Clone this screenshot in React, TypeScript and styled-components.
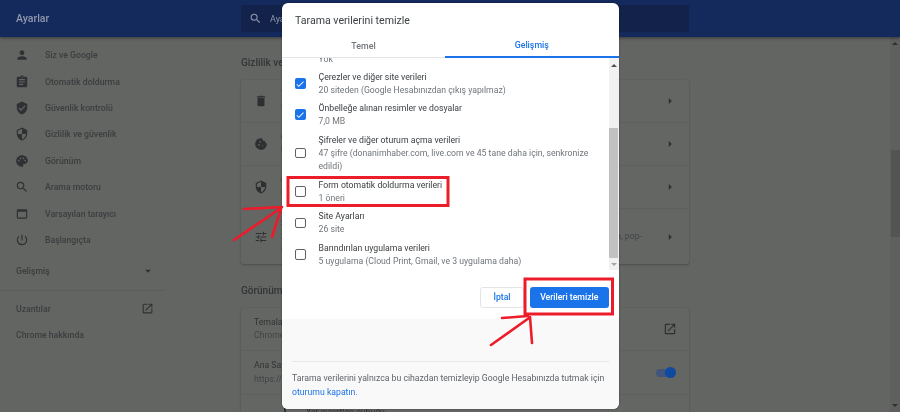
import React from "react";
import styled, { createGlobalStyle } from "styled-components";
import {
  MdPerson, MdAssignment, MdVerifiedUser, MdSecurity, MdPalette, MdSearch, MdWebAsset,
  MdPowerSettingsNew, MdOpenInNew, MdDelete, MdCookie, MdTune, MdArrowDropDown, MdArrowRight, MdCheck,
} from "react-icons/md";

const Global = createGlobalStyle`
  html, body { margin: 0; padding: 0; width: 900px; height: 412px; overflow: hidden; background: #636563; }
  * { box-sizing: border-box; }
  body { font-family: Roboto, "Liberation Sans", sans-serif; }
`;

const Page = styled.div`
  position: relative; width: 900px; height: 412px; overflow: hidden; background: #636563;
  color: #38393b; font-size: 8.7px; filter: blur(0.35px);
`;
const TopBar = styled.header`
  height: 37px; background: #152a5c; display: flex; align-items: center;
  box-shadow: 0 1px 3px rgba(0,0,0,.45); position: relative; z-index: 1;
`;
const BarTitle = styled.div`width: 241px; padding-left: 16px; color: #8f98ad; font-size: 10.5px; font-weight: 500;`;
const SearchBox = styled.div`
  width: 448px; height: 27px; background: #12224a; border-radius: 2px; display: flex; align-items: center;
  padding-left: 8px; gap: 8px; color: #8f98ad; font-size: 9px;
  svg { font-size: 13px; }
`;
const Body = styled.div`display: flex; height: 375px;`;
const Side = styled.nav`width: 165px; padding-top: 5px; flex: none;`;
const SideRow = styled.div`
  height: 26.4px; display: flex; align-items: center; padding-left: 15px; gap: 16px; font-weight: 500; color: #3c3d3f;
  svg { font-size: 14px; flex: none; color: #303134; }
`;
const SideAdv = styled.div`
  height: 26.4px; margin-top: 5px; display: flex; align-items: center; justify-content: space-between; padding: 0 10px 0 16px;
  font-weight: 500; color: #3c3d3f;
  svg { font-size: 14px; color: #303134; }
`;
const SideLine = styled.div`height: 1px; background: #5c5e5c; margin: 5px 0 5px;`;
const SideLink = styled(SideAdv)`margin-top: 0; padding-right: 11px; svg { font-size: 13px; }`;
const Main = styled.main`flex: 1; padding-left: 76px;`;
const Content = styled.div`width: 448px;`;
const Heading = styled.h2<{ $top: number }>`
  margin: ${(p) => p.$top}px 0 0; height: 14px; line-height: 14px; font-size: 10px; font-weight: 500; color: #333437;
`;
const Card = styled.section`
  background: #646664; border-radius: 2px; margin-top: 10px;
  box-shadow: 0 1px 2px rgba(0,0,0,.22), 0 0 1px rgba(0,0,0,.15);
`;
const Row = styled.div<{ $h: number }>`
  height: ${(p) => p.$h}px; display: flex; align-items: center; padding: 0 12px 0 13px; gap: 13px;
  & + & { border-top: 1px solid #5e605e; }
`;
const RowIcon = styled.span`display: flex; flex: none; font-size: 14px; color: #2e2f31;`;
const RowText = styled.div`flex: 1; line-height: 13.2px;`;
const RowTitle = styled.div`color: #323335;`;
const RowSub = styled.div`color: #434446;`;
const Chevron = styled.span`display: flex; font-size: 14px; color: #2e2f31;`;
const PlainRow = styled(Row)`padding-left: 13px;`;
const FontRow = styled(Row)`padding-left: 43px; gap: 16px; align-items: flex-start; padding-top: 11px;`;
const FontMark = styled.span`width: 6px; height: 10px; border-left: 2px solid #2e2f31; flex: none;`;
const Toggle = styled.span`
  position: relative; width: 19px; height: 8px; border-radius: 4px; background: #41557f; margin-right: 2px; flex: none;
  &::after { content: ""; position: absolute; right: -1px; top: -1.5px; width: 11px; height: 11px; border-radius: 50%; background: #0f4aa0; }
`;
const PageScroll = styled.div`
  width: 10px; flex: none; background: #5e5f5e; display: flex; flex-direction: column; align-items: center; height: 375px;
`;
const Arrow = styled.span<{ $down?: boolean; $c: string }>`
  display: block; width: 0; height: 0; flex: none; border-left: 3px solid transparent; border-right: 3px solid transparent;
  ${(p) => (p.$down ? `border-top: 3px solid ${p.$c};` : `border-bottom: 3px solid ${p.$c};`)}
`;
const PageThumb = styled.div`width: 9px; height: 87px; margin-top: 105px; background: #535453; margin-bottom: auto;`;
const PageArrowUp = styled(Arrow)`margin-top: 5px;`;
const PageArrowDown = styled(Arrow)`margin-bottom: 5px;`;

const Modal = styled.div`
  position: absolute; z-index: 2; left: 282px; top: 3px; width: 336.5px; height: 406px; background: #fff; border-radius: 6px;
  display: flex; flex-direction: column; overflow: hidden; color: #202124; box-shadow: 0 0 2px rgba(0,0,0,.4);
`;
const ModalTitle = styled.div`height: 33px; padding: 11px 0 0 13px; font-size: 10.6px; line-height: 14px; color: #3c4043;`;
const Tabs = styled.div`
  height: 22px; display: grid; grid-template-columns: 163px 1fr; border-bottom: 1px solid #e4e5e7; font-size: 8.8px; font-weight: 500;
`;
const Tab = styled.div<{ $on?: boolean }>`
  display: flex; align-items: center; justify-content: center; padding-bottom: 2px; height: 22px;
  color: ${(p) => (p.$on ? "#1a73e8" : "#70757a")};
  border-bottom: ${(p) => (p.$on ? "2px solid #1a73e8" : "none")};
`;
const Scroller = styled.div`height: 212px; display: flex; flex: none; overflow: hidden;`;
const List = styled.div`flex: 1; margin-top: -21px; padding-left: 13px;`;
const ListItem = styled.div<{ $h: number }>`
  height: ${(p) => p.$h}px; display: flex; align-items: center; gap: 13px;
`;
const Box = styled.span<{ $on?: boolean }>`
  width: 10.5px; height: 10.5px; flex: none; border-radius: 2px; display: flex; align-items: center; justify-content: center;
  background: ${(p) => (p.$on ? "#1a73e8" : "#fff")};
  border: ${(p) => (p.$on ? "none" : "1.4px solid #5f6368")};
  color: #fff; font-size: 10px;
`;
const ItemText = styled.div`flex: 1; line-height: 13px; padding-right: 16px;`;
const ItemTitle = styled.div`color: #3c4043;`;
const ItemSub = styled.div`color: #70757a;`;
const Bar = styled.div`
  width: 10px; flex: none; background: #f1f1f1; display: flex; flex-direction: column; align-items: center; padding-top: 6px;
`;
const BarThumb = styled.div`width: 8.5px; height: 130px; margin-top: 61px; margin-bottom: 5px; background: #c1c1c1;`;
const Actions = styled.div`
  height: 49px; flex: none; display: flex; justify-content: flex-end; align-items: flex-start; gap: 6px; padding: 17px 10px 0 0;
`;
const CancelBtn = styled.button`
  all: unset; box-sizing: border-box; width: 44px; height: 21px; border: 1px solid #e2e4e7; border-radius: 3px; text-align: center;
  font: 500 8.7px/19px Roboto, sans-serif; color: #1a73e8;
`;
const ConfirmBtn = styled.button`
  all: unset; box-sizing: border-box; width: 78.5px; height: 21px; background: #1a73e8; border-radius: 3px; text-align: center;
  font: 500 8.7px/21px Roboto, sans-serif; color: #fff;
`;
const Foot = styled.div`flex: 1; background: #f9f9f9; padding: 42px 10px 0 10px;`;
const FootText = styled.div`border-top: 1px solid #e6e7e8; padding-top: 10px; line-height: 13.5px; color: #5f6368;`;
const FootLink = styled.span`color: #1a73e8;`;
const Marks = styled.svg`position: absolute; z-index: 3; left: 0; top: 0; pointer-events: none;`;

const sideItems: [React.ComponentType, string][] = [
  [MdPerson, "Siz ve Google"], [MdAssignment, "Otomatik doldurma"], [MdVerifiedUser, "Güvenlik kontrolü"],
  [MdSecurity, "Gizlilik ve güvenlik"], [MdPalette, "Görünüm"], [MdSearch, "Arama motoru"],
  [MdWebAsset, "Varsayılan tarayıcı"], [MdPowerSettingsNew, "Başlangıçta"],
];

const privacy = [
  { Icon: MdDelete, h: 42, t: "Tarama verilerini temizle", s: ["Geçmişi, çerezleri, önbelleği ve diğer verileri temizle"] },
  { Icon: MdCookie, h: 43, t: "Çerezler ve diğer site verileri", s: ["Üçüncü taraf çerezleri engellendi"] },
  { Icon: MdSecurity, h: 43, t: "Güvenlik", s: ["Güvenli Tarama ve diğer güvenlik ayarları"] },
  { Icon: MdTune, h: 56, t: "Site Ayarları", s: ["Sitelerin hangi bilgileri kullanabileceğini ve ne gösterebileceğini denetler (konum, kamera, pop-up'lar ve diğerleri)"] },
];

const items = [
  { h: 31, on: true, t: "İndirme geçmişi", s: "Yok" },
  { h: 31, on: true, t: "Çerezler ve diğer site verileri", s: "20 siteden (Google Hesabınızdan çıkış yapılmaz)" },
  { h: 31, on: true, t: "Önbelleğe alınan resimler ve dosyalar", s: "7,0 MB" },
  { h: 46, t: "Şifreler ve diğer oturum açma verileri", s: "47 şifre (donanimhaber.com, live.com ve 45 tane daha için, senkronize edildi)" },
  { h: 31, t: "Form otomatik doldurma verileri", s: "1 öneri" },
  { h: 32, t: "Site Ayarları", s: "26 site" },
  { h: 31, t: "Barındırılan uygulama verileri", s: "5 uygulama (Cloud Print, Gmail, ve 3 uygulama daha)" },
];

export default function App() {
  return (
    <Page>
      <Global />
      <TopBar>
        <BarTitle>Ayarlar</BarTitle>
        <SearchBox><MdSearch />Ayarlarda arayın</SearchBox>
      </TopBar>
      <Body>
        <Side>
          {sideItems.map(([I, label]) => (
            <SideRow key={label}><I />{label}</SideRow>
          ))}
          <SideAdv>Gelişmiş<MdArrowDropDown /></SideAdv>
          <SideLine />
          <SideLink>Uzantılar<MdOpenInNew /></SideLink>
          <SideLink>Chrome hakkında</SideLink>
        </Side>
        <Main>
          <Content>
            <Heading $top={19}>Gizlilik ve güvenlik</Heading>
            <Card>
              {privacy.map(({ Icon, h, t, s }) => (
                <Row key={t} $h={h}>
                  <RowIcon><Icon /></RowIcon>
                  <RowText>
                    <RowTitle>{t}</RowTitle>
                    {s.map((x) => <RowSub key={x}>{x}</RowSub>)}
                  </RowText>
                  <Chevron><MdArrowRight /></Chevron>
                </Row>
              ))}
            </Card>
            <Heading $top={20}>Görünüm</Heading>
            <Card>
              <PlainRow $h={42}>
                <RowText>
                  <RowTitle>Temalar</RowTitle>
                  <RowSub>Chrome Web Mağazası'nı aç</RowSub>
                </RowText>
                <Chevron><MdOpenInNew /></Chevron>
              </PlainRow>
              <PlainRow $h={44}>
                <RowText>
                  <RowTitle>Ana Sayfa düğmesini göster</RowTitle>
                  <RowSub>https://www.google.com/</RowSub>
                </RowText>
                <Toggle />
              </PlainRow>
              <FontRow $h={30}>
                <FontMark />
                <RowText><RowTitle>Yer işaretleri çubuğu</RowTitle></RowText>
              </FontRow>
            </Card>
          </Content>
        </Main>
        <PageScroll>
          <PageArrowUp $c="#2e2f31" />
          <PageThumb />
          <PageArrowDown $down $c="#2e2f31" />
        </PageScroll>
      </Body>
      <Modal>
        <ModalTitle>Tarama verilerini temizle</ModalTitle>
        <Tabs>
          <Tab>Temel</Tab>
          <Tab $on>Gelişmiş</Tab>
        </Tabs>
        <Scroller>
          <List>
            {items.map((it) => (
              <ListItem key={it.t} $h={it.h}>
                <Box $on={it.on}>{it.on && <MdCheck />}</Box>
                <ItemText>
                  <ItemTitle>{it.t}</ItemTitle>
                  <ItemSub>{it.s}</ItemSub>
                </ItemText>
              </ListItem>
            ))}
          </List>
          <Bar>
            <Arrow $c="#505050" />
            <BarThumb />
            <Arrow $down $c="#a3a3a3" />
          </Bar>
        </Scroller>
        <Actions>
          <CancelBtn>İptal</CancelBtn>
          <ConfirmBtn>Verileri temizle</ConfirmBtn>
        </Actions>
        <Foot>
          <FootText>
            Tarama verilerini yalnızca bu cihazdan temizleyip Google Hesabınızda tutmak için{" "}
            <FootLink>oturumu kapatın.</FootLink>
          </FootText>
        </Foot>
      </Modal>
      <Marks width="900" height="412" viewBox="0 0 900 412" fill="none" stroke="#ec1c2a">
        <rect x="288" y="177.5" width="160" height="28" strokeWidth="3" />
        <rect x="525" y="279" width="87.5" height="35" strokeWidth="3" />
        <g strokeWidth="2.6" strokeLinecap="round">
          <path d="M234 240 L281 208" />
          <path d="M244 209 L282 207" />
          <path d="M272 237 L281 209" />
          <path d="M491 345 L529 318" />
          <path d="M502 318 L528 316" />
          <path d="M530 317 L532 343" />
        </g>
      </Marks>
    </Page>
  );
}
